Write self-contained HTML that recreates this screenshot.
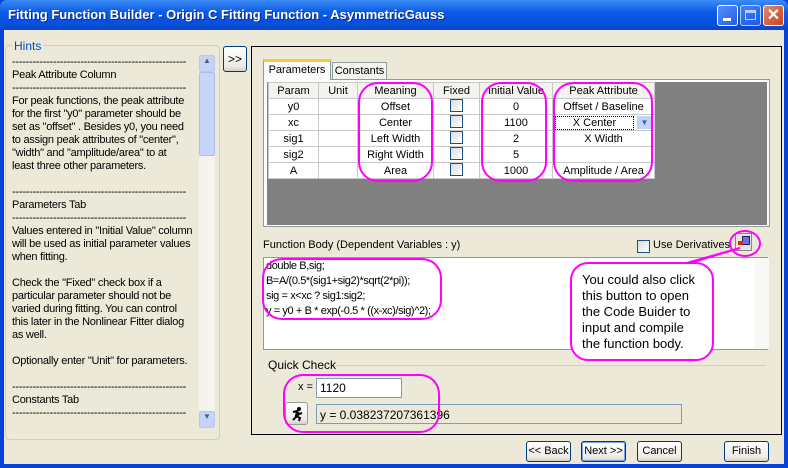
<!DOCTYPE html>
<html><head><style>
*{box-sizing:border-box}
html,body{margin:0;width:788px;height:468px;overflow:hidden}
body{background:#0842d8;font-family:"Liberation Sans",sans-serif;font-size:11px;position:relative}
.abs{position:absolute}
#title{left:0;top:0;width:788px;height:30px;background:linear-gradient(#3b8cf6,#0d5be6 40%,#0550dc 80%,#0a46c0);border-radius:7px 7px 0 0}
#title span{position:absolute;left:8px;top:7px;color:#fff;font-weight:bold;font-size:13px;text-shadow:1px 1px #0a2a8a}
.tb{top:5px;width:21px;height:21px;border:1px solid #fff;border-radius:3px;background:linear-gradient(135deg,#5a8ff5,#2060e8)}
#client{left:4px;top:30px;width:780px;height:434px;background:#ece9d8}
.grp{border:1px solid #d0d0bf;border-radius:4px}
.btn{border:1px solid #003c74;border-radius:3px;background:linear-gradient(#fff,#ecebe6 80%,#d6d0c5);text-align:center;font-size:12px;line-height:19px;white-space:nowrap}
.t{white-space:pre;font-size:11px;color:#000}
table{border-collapse:collapse;table-layout:fixed}
td{border:1px solid #c8c8c8;height:16px;line-height:14px;text-align:center;font-size:11px;padding:0;overflow:hidden;white-space:nowrap}
.mag{border:2px solid #f0f;border-radius:20px}
.cb{width:13px;height:13px;border:1px solid #1c5180;background:linear-gradient(135deg,#dcdcd6,#fff);display:inline-block;vertical-align:middle}
td .cb{vertical-align:-2px}
</style></head><body>
<div id="title" class="abs"><span>Fitting Function Builder - Origin C Fitting Function - AsymmetricGauss</span>
<div class="abs tb" style="left:717px"><div class="abs" style="left:5px;top:12px;width:8px;height:3px;background:#fff"></div></div>
<div class="abs tb" style="left:740px;opacity:.7"><div class="abs" style="left:4px;top:4px;width:11px;height:10px;border:1px solid #fff;border-top-width:3px"></div></div>
<div class="abs tb" style="left:763px;background:linear-gradient(135deg,#e88a6a,#c8401c);color:#fff;font-weight:bold;font-size:16px;text-align:center;line-height:19px">✕</div>
</div>
<div id="client" class="abs"></div>
<!-- hints -->
<div class="abs grp" style="left:5px;top:45px;width:215px;height:395px"></div>
<div class="abs" style="left:12px;top:39px;background:#ece9d8;color:#0046d5;padding:0 2px;font-size:12px">Hints</div>
<div class="abs t" style="left:12px;top:56px;line-height:13px;font-size:11px;letter-spacing:-0.25px">---------------------------------------------------
Peak Attribute Column
---------------------------------------------------
For peak functions, the peak attribute
for the first "y0" parameter should be
set as "offset" . Besides y0, you need
to assign peak attributes of "center",
"width" and "amplitude/area" to at
least three other parameters.

---------------------------------------------------
Parameters Tab
---------------------------------------------------
Values entered in "Initial Value" column
will be used as initial parameter values
when fitting.

Check the "Fixed" check box if a
particular parameter should not be
varied during fitting. You can control
this later in the Nonlinear Fitter dialog
as well.

Optionally enter "Unit" for parameters.

---------------------------------------------------
Constants Tab
---------------------------------------------------</div>
<div class="abs" style="left:199px;top:55px;width:16px;height:373px;background:#f4f3ee"></div>
<div class="abs" style="left:199px;top:55px;width:16px;height:17px;background:#c6d3f7;border:1px solid #b8c8f0;border-radius:2px;color:#4d6185;font-size:8px;text-align:center">▲</div>
<div class="abs" style="left:199px;top:72px;width:16px;height:84px;background:#c6d6fb;border:1px solid #a9bff0;border-radius:2px"></div>
<div class="abs" style="left:199px;top:411px;width:16px;height:17px;background:#c6d3f7;border:1px solid #b8c8f0;border-radius:2px;color:#4d6185;font-size:8px;text-align:center">▼</div>
<div class="abs btn" style="left:223px;top:46px;width:24px;height:26px;line-height:24px">&gt;&gt;</div>
<!-- right panel -->
<div class="abs" style="left:251px;top:46px;width:531px;height:389px;border:1px solid #000"></div>
<div class="abs" style="left:263px;top:79px;width:507px;height:148px;border:1px solid #919b9c;background:#fcfcfe"></div>
<div class="abs" style="left:263px;top:59px;width:68px;height:21px;background:#fcfcfe;border:1px solid #919b9c;border-bottom:none;border-top:3px solid #ffc83c;text-align:center;line-height:16px">Parameters</div>
<div class="abs" style="left:332px;top:62px;width:55px;height:17px;background:#f4f3ee;border:1px solid #919b9c;border-bottom:none;text-align:center;line-height:16px">Constants</div>
<div class="abs" style="left:267px;top:82px;width:500px;height:143px;background:#808080"></div>
<table class="abs" style="left:268px;top:82px;background:#fff;width:386px">
<tr style="background:#f4f3ee"><td style="width:50px">Param</td><td style="width:39px">Unit</td><td style="width:76px">Meaning</td><td style="width:46px">Fixed</td><td style="width:73px">Initial Value</td><td style="width:102px">Peak Attribute</td></tr>
<tr><td>y0</td><td></td><td>Offset</td><td><span class="cb"></span></td><td>0</td><td>Offset / Baseline</td></tr>
<tr><td>xc</td><td></td><td>Center</td><td><span class="cb"></span></td><td>1100</td><td style="text-align:left"><span style="display:inline-block;width:79px;border:1px dotted #000;line-height:12px;text-align:center;margin-left:2px">X Center</span><span style="display:inline-block;width:15px;height:13px;background:#c1d3fb;color:#4d6185;font-size:8px;line-height:13px;text-align:center;margin-left:3px;vertical-align:top">▼</span></td></tr>
<tr><td>sig1</td><td></td><td>Left Width</td><td><span class="cb"></span></td><td>2</td><td>X Width</td></tr>
<tr><td>sig2</td><td></td><td>Right Width</td><td><span class="cb"></span></td><td>5</td><td></td></tr>
<tr><td>A</td><td></td><td>Area</td><td><span class="cb"></span></td><td>1000</td><td>Amplitude / Area</td></tr>
</table>
<div class="abs" style="left:263px;top:239px">Function Body (Dependent Variables : y)</div>
<div class="abs cb" style="left:637px;top:240px"></div>
<div class="abs" style="left:653px;top:239px">Use Derivatives</div>
<div class="abs" style="left:735px;top:233px;width:17px;height:18px;background:#e8e6dc;border:1px solid #888"><div class="abs" style="left:6px;top:2px;width:8px;height:9px;background:#6a6aff;border:1px solid #224"></div><div class="abs" style="left:2px;top:7px;width:5px;height:4px;background:#d22"></div></div>
<div class="abs" style="left:263px;top:257px;width:505px;height:93px;background:#fff;border:1px solid #7f9db9"></div>
<div class="abs" style="left:754px;top:258px;width:15px;height:91px;background:#f8f8f4"></div>
<div class="abs t" style="left:266px;top:259px;line-height:15px;letter-spacing:-0.4px">double B,sig;
B=A/(0.5*(sig1+sig2)*sqrt(2*pi));
sig = x&lt;xc ? sig1:sig2;
y = y0 + B * exp(-0.5 * ((x-xc)/sig)^2);</div>
<div class="abs" style="left:268px;top:358px;font-size:12px">Quick Check</div>
<div class="abs" style="left:336px;top:365px;width:430px;height:1px;background:#d0d0bf"></div>
<div class="abs" style="left:298px;top:381px">x =</div>
<div class="abs" style="left:316px;top:378px;width:86px;height:20px;background:#fff;border:1px solid #7f9db9;padding:2px 3px;font-size:12px">1120</div>
<div class="abs btn" style="left:285px;top:402px;width:23px;height:23px;border-color:#999"><svg width="21" height="21" viewBox="0 0 21 21"><circle cx="13" cy="6" r="2" fill="#000"/><path d="M7 9 L11 8 L13 11 L10 14 L7 17 M11 8 L10 13 L14 15 L13 18 M13 11 L16 10" stroke="#000" stroke-width="2" fill="none"/></svg></div>
<div class="abs" style="left:316px;top:404px;width:366px;height:20px;background:#ece9d8;border:1px solid #7f9db9;padding:3px 3px;font-size:12px">y = 0.038237207361396</div>
<!-- bottom buttons -->
<div class="abs btn" style="left:526px;top:441px;width:45px;height:21px;font-size:11px">&lt;&lt; Back</div>
<div class="abs btn" style="left:581px;top:441px;width:45px;height:21px;font-size:11px;box-shadow:inset 0 0 0 1px #7ca4e8">Next &gt;&gt;</div>
<div class="abs btn" style="left:637px;top:441px;width:45px;height:21px;font-size:11px">Cancel</div>
<div class="abs btn" style="left:724px;top:441px;width:45px;height:21px;font-size:11px">Finish</div>
<!-- magenta -->
<div class="abs mag" style="left:358px;top:82px;width:75px;height:100px"></div>
<div class="abs mag" style="left:481px;top:82px;width:66px;height:100px"></div>
<div class="abs mag" style="left:553px;top:82px;width:100px;height:100px"></div>
<div class="abs mag" style="left:262px;top:258px;width:180px;height:62px"></div>
<div class="abs mag" style="left:283px;top:374px;width:157px;height:59px"></div>
<div class="abs mag" style="left:729px;top:230px;width:32px;height:27px;border-radius:50%"></div>
<svg class="abs" style="left:0;top:0" width="788" height="468"><polygon points="683,264 740,248 690,263" fill="#fff" stroke="#f0f" stroke-width="2"/></svg>
<div class="abs mag" style="left:570px;top:262px;width:144px;height:99px;background:#fff;border-radius:18px"></div>
<div class="abs t" style="left:582px;top:272px;font-size:13px;line-height:16px">You could also click
this button to open
the Code Buider to
input and compile
the function body.</div>
</body></html>
